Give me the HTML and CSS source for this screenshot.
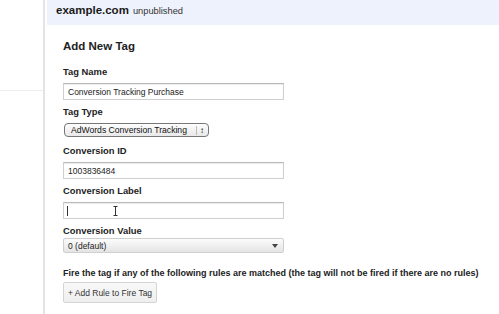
FILE: index.html
```html
<!DOCTYPE html>
<html lang="en">
<head>
    <meta charset="UTF-8">
    <title>Add New Tag</title>
    <link rel="stylesheet" href="styles.css">
</head>
<body>
    <div class="page">
        <aside class="sidebar">
            <div class="sidebar-rule"></div>
        </aside>

        <main class="main">
            <header class="site-bar">
                <span class="site-name">example.com</span>
                <span class="site-state">unpublished</span>
            </header>

            <form class="tag-form">
                <h1>Add New Tag</h1>

                <label class="field-label lbl-first">Tag Name</label>
                <input class="text-input" type="text" value="Conversion Tracking Purchase">

                <label class="field-label">Tag Type</label>
                <div class="mac-select">
                    <span>AdWords Conversion Tracking</span>
                    <span class="updown">&#8597;</span>
                </div>

                <label class="field-label">Conversion ID</label>
                <input class="text-input" type="text" value="1003836484">

                <label class="field-label">Conversion Label</label>
                <div class="text-input focus-box">
                    <span class="caret"></span>
                    <svg class="ibeam" width="5" height="10" viewBox="0 0 5 10">
                        <path d="M0.5 0.5h4M2.5 0.5v9M0.5 9.5h4" stroke="#333" stroke-width="1" fill="none"/>
                    </svg>
                </div>

                <label class="field-label lbl-tight">Conversion Value</label>
                <div class="drop-select">
                    <span>0 (default)</span>
                    <span class="arrow"></span>
                </div>

                <p class="rules-note">Fire the tag if any of the following rules are matched (the tag will not be fired if there are no rules)</p>
                <button type="button" class="add-rule">+ Add Rule to Fire Tag</button>
            </form>
        </main>
    </div>
</body>
</html>
```

FILE: styles.css
```css
/* Basic Reset */
* {
    margin: 0;
    padding: 0;
    box-sizing: border-box;
}

body {
    font-family: "Liberation Sans", Arial, sans-serif;
    color: #222;
    background-color: #fff;
    width: 499px;
    height: 314px;
    overflow: hidden;
}

.page {
    display: flex;
    height: 314px;
}

/* Left column */
.sidebar {
    width: 45px;
    flex-shrink: 0;
    border-right: 2px solid #e4e4e4;
}

.sidebar-rule {
    margin-top: 90px;
    border-top: 1px solid #ececec;
}

/* Main area */
.main {
    flex: 1;
    margin-left: 2px;
}

.site-bar {
    height: 25px;
    background-color: #eef2fc;
    padding: 4px 0 0 9px;
    display: flex;
    align-items: baseline;
    gap: 4px;
}

.site-name {
    font-size: 11.5px;
    font-weight: bold;
    color: #1a1a1a;
}

.site-state {
    font-size: 9.3px;
    color: #333;
}

.tag-form {
    padding: 14px 0 0 16px;
    display: flex;
    flex-direction: column;
    align-items: flex-start;
}

h1 {
    font-size: 11.5px;
    line-height: 14px;
    color: #222;
}

.field-label {
    font-size: 9.4px;
    font-weight: bold;
    line-height: 12px;
    margin-top: 6px;
    margin-bottom: 5px;
}

.lbl-first {
    margin-top: 13px;
}

.lbl-tight {
    margin-bottom: 1px;
}

.text-input {
    width: 221px;
    height: 17px;
    border: 1px solid #cfcfcf;
    border-top-color: #b9b9b9;
    box-shadow: inset 0 1px 1px rgba(0, 0, 0, 0.08);
    padding: 0 4px;
    font-family: "Liberation Sans", Arial, sans-serif;
    font-size: 8.5px;
    color: #222;
    background: #fff;
}

.focus-box {
    position: relative;
}

.caret {
    position: absolute;
    left: 3px;
    top: 3px;
    width: 1px;
    height: 10px;
    background: #333;
}

.ibeam {
    position: absolute;
    left: 49px;
    top: 3px;
}

/* Mac style select */
.mac-select {
    width: 145px;
    height: 14px;
    margin-left: 1px;
    margin-bottom: 2px;
    border: 1px solid #777;
    border-radius: 4px;
    background: linear-gradient(#fdfdfd, #e9e9e9);
    display: flex;
    justify-content: space-between;
    align-items: center;
    padding: 0 4px 0 6px;
    font-size: 8.6px;
    color: #111;
}

.updown {
    font-size: 8px;
    font-weight: bold;
    border-left: 1px solid #bbb;
    padding-left: 3px;
}

/* Dropdown */
.drop-select {
    width: 221px;
    height: 15px;
    border: 1px solid #cfcfcf;
    border-radius: 2px;
    background: linear-gradient(#fcfcfc, #e4e4e4);
    display: flex;
    justify-content: space-between;
    align-items: center;
    padding: 0 5px 0 4px;
    font-size: 8.5px;
    color: #222;
}

.arrow {
    width: 0;
    height: 0;
    border-left: 3px solid transparent;
    border-right: 3px solid transparent;
    border-top: 4px solid #444;
}

.rules-note {
    font-size: 9px;
    font-weight: bold;
    line-height: 12px;
    margin-top: 14px;
    margin-bottom: 3px;
    white-space: nowrap;
}

.add-rule {
    width: 94px;
    height: 21px;
    border: 1px solid #d4d4d4;
    border-radius: 2px;
    background: linear-gradient(#f8f8f8, #efefef);
    font-family: "Liberation Sans", Arial, sans-serif;
    font-size: 8.5px;
    color: #333;
}
```
